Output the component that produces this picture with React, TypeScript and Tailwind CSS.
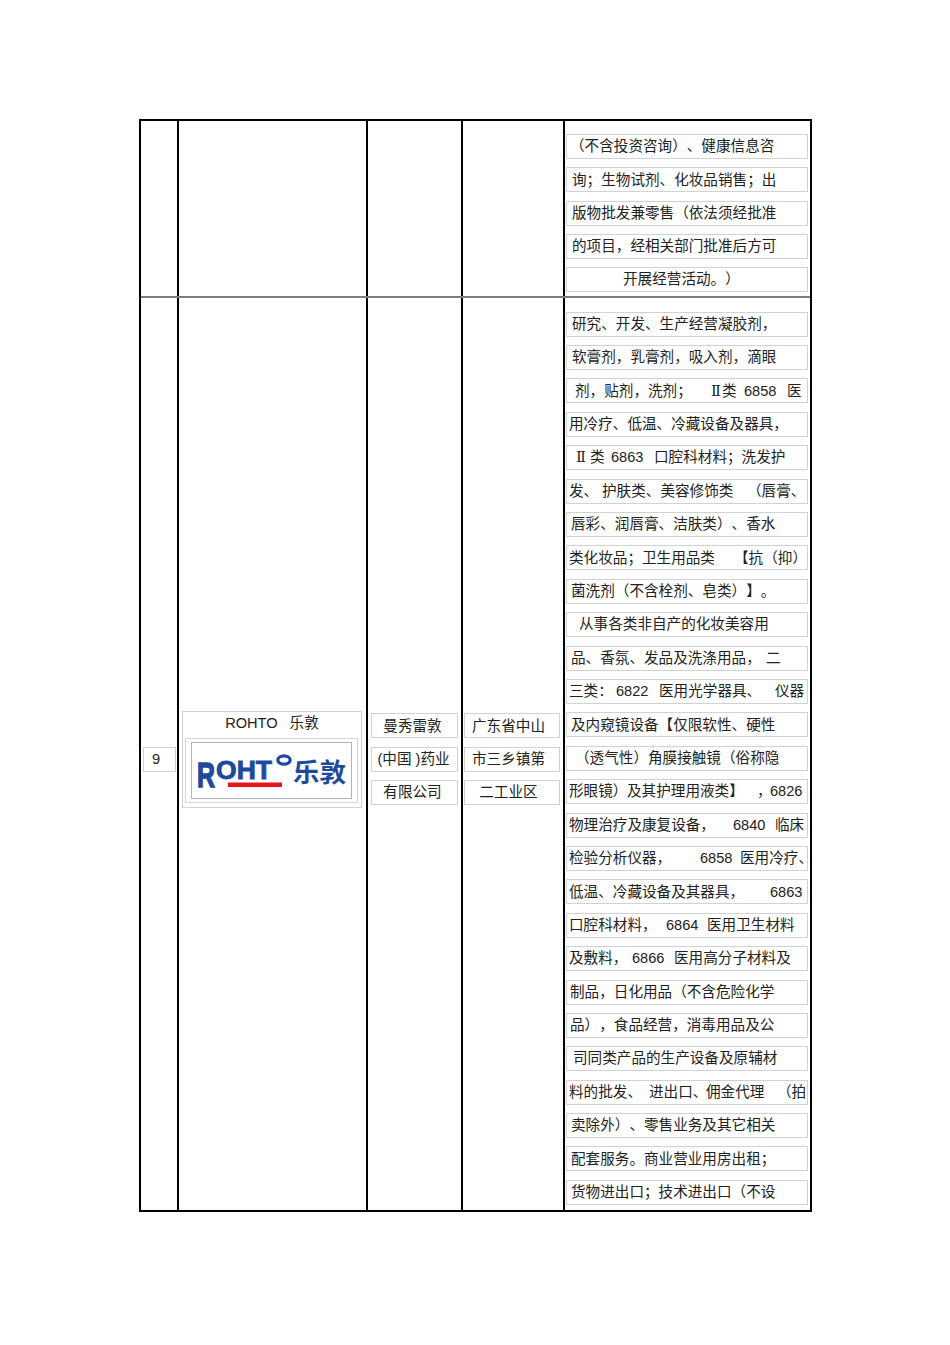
type Seg = [string, number];

// 每行文字：[文本, 起始x]，起始x 为截图中的像素位置
const row1: Seg[][] = [
  [['（不含投资咨询）、健康信息咨', 571]],
  [['询；生物试剂、化妆品销售；出', 573]],
  [['版物批发兼零售（依法须经批准', 573]],
  [['的项目，经相关部门批准后方可', 573]],
  [['开展经营活动。）', 624]],
];

const row2: Seg[][] = [
  [['研究、开发、生产经营凝胶剂，', 573]],
  [['软膏剂，乳膏剂，吸入剂，滴眼', 573]],
  [['剂，贴剂，洗剂；', 576], ['Ⅱ', 712], ['类', 723], ['6858', 745], ['医', 788]],
  [['用冷疗、低温、冷藏设备及器具，', 570]],
  [['Ⅱ', 577], ['类', 591], ['6863', 612], ['口腔科材料；洗发护', 655]],
  [['发、', 570], ['护肤类、美容修饰类', 603], ['（唇膏、', 748]],
  [['唇彩、润唇膏、洁肤类）、香水', 572]],
  [['类化妆品；卫生用品类', 570], ['【抗（抑）', 735]],
  [['菌洗剂（不含栓剂、皂类）】。', 572]],
  [['从事各类非自产的化妆美容用', 580]],
  [['品、香氛、发品及洗涤用品，', 572], ['二', 767]],
  [['三类：', 570], ['6822', 617], ['医用光学器具、', 660], ['仪器', 776]],
  [['及内窥镜设备【仅限软性、硬性', 572]],
  [['（透气性）角膜接触镜（俗称隐', 576]],
  [['形眼镜）', 570], ['及其护理用液类】', 628], ['，', 758], ['6826', 771]],
  [['物理治疗及康复设备，', 570], ['6840', 734], ['临床', 776]],
  [['检验分析仪器，', 570], ['6858', 701], ['医用冷疗、', 741]],
  [['低温、冷藏设备及其器具，', 570], ['6863', 771]],
  [['口腔科材料，', 570], ['6864', 667], ['医用卫生材料', 708]],
  [['及敷料，', 570], ['6866', 633], ['医用高分子材料及', 675]],
  [['制品，日化用品（不含危险化学', 571]],
  [['品），食品经营，消毒用品及公', 571]],
  [['司同类产品的生产设备及原辅材', 574]],
  [['料的批发、', 570], ['进出口、', 650], ['佣金代理', 707], ['（拍', 778]],
  [['卖除外）、零售业务及其它相关', 572]],
  [['配套服务。商业营业用房出租；', 572]],
  [['货物进出口；技术进出口（不设', 572]],
];

function renderText(t: string) {
  const parts = t.split('Ⅱ');
  return parts.map((p, i) => (
    <span key={i}>
      {i > 0 && <span className="font-['Liberation_Serif','DejaVu_Serif','DejaVu_Sans','Noto_Sans_CJK_SC',serif]">Ⅱ</span>}
      {p}
    </span>
  ));
}

function TextLine({ segs }: { segs: Seg[] }) {
  const left = 568;
  return (
    <div
      className="flex h-[25px] w-[242px] shrink-0 items-center whitespace-nowrap border border-[#d2d2d2] leading-none"
      style={{ paddingLeft: segs[0][1] - left }}
    >
      {segs.map(([t, x], i) => (
        <span
          key={i}
          className="shrink-0"
          style={i < segs.length - 1 ? { width: segs[i + 1][1] - x } : undefined}
        >
          {renderText(t)}
        </span>
      ))}
    </div>
  );
}

function SmallBox({ children, className = '' }: { children: React.ReactNode; className?: string }) {
  return (
    <div className={'flex h-[25px] items-center justify-center whitespace-nowrap border border-[#d2d2d2] leading-none ' + className}>
      {children}
    </div>
  );
}

function RohtoLogo() {
  const blue = '#1f4a9c';
  return (
    <svg width="158" height="55" viewBox="0 0 158 55">
      <text
        fontFamily="'Liberation Sans', Arial, sans-serif"
        fontWeight="bold"
        fill={blue}
        stroke={blue}
      >
        <tspan x="5" y="43.5" fontSize="35" textLength="18" lengthAdjust="spacingAndGlyphs" strokeWidth="1.4">
          R
        </tspan>
        <tspan x="24" y="36" fontSize="25" textLength="56" lengthAdjust="spacingAndGlyphs" strokeWidth="0.8">
          OHT
        </tspan>
      </text>
      <ellipse cx="92" cy="17" rx="6.2" ry="4.2" fill="none" stroke={blue} strokeWidth="3.2" />
      <rect x="36" y="39.5" width="54" height="4.5" fill="#e8141e" />
      <text
        x="101"
        y="38.5"
        fontFamily="'Noto Sans CJK SC', sans-serif"
        fontWeight="bold"
        fontSize="26"
        textLength="53"
        lengthAdjust="spacingAndGlyphs"
        fill={blue}
      >
        乐敦
      </text>
    </svg>
  );
}

export default function App() {
  return (
    <div className="min-h-[1345px] bg-white pl-[139px] pt-[119px] font-['Liberation_Sans','Noto_Sans_CJK_SC',sans-serif] text-[14.6px] text-[#222] [text-spacing-trim:space-all]">
      <div className="w-[673px] border-2 border-black">
        {/* 第一行（续上页） */}
        <div className="flex h-[177px] border-b-2 border-[#7c7c7c]">
          <div className="w-[38px] border-r-2 border-black" />
          <div className="w-[189px] border-r-2 border-black" />
          <div className="w-[95px] border-r-2 border-black" />
          <div className="w-[102px] border-r-2 border-black" />
          <div className="flex flex-1 flex-col gap-[8.3px] pl-[1px] pt-[13px]">
            {row1.map((segs, i) => (
              <TextLine key={i} segs={segs} />
            ))}
          </div>
        </div>

        {/* 第二行 */}
        <div className="flex h-[912px]">
          <div className="w-[38px] border-r-2 border-black pt-[449.3px]">
            <div className="ml-[2px] flex h-[24.5px] w-[33px] items-center border border-[#d2d2d2] pl-[8px] leading-none">
              9
            </div>
          </div>

          <div className="w-[189px] border-r-2 border-black pt-[412.7px]">
            <div className="ml-[3px] h-[97.6px] w-[180px] border border-[#d2d2d2]">
              <div className="pt-[3.7px] text-center leading-[17px]">
                ROHTO<span className="ml-[12px]">乐敦</span>
              </div>
              <div className="ml-[2px] mt-[5.9px] h-[65px] w-[173px] border border-[#d6d6d6] pl-[5px] pt-[3px]">
                <div className="h-[56.7px] w-[160.7px] border border-[#b4b4b4] bg-white">
                  <RohtoLogo />
                </div>
              </div>
            </div>
          </div>

          <div className="flex w-[95px] flex-col gap-[8.4px] border-r-2 border-black pt-[415.3px]">
            <SmallBox className="ml-[3px] w-[87px] pr-[4px]">曼秀雷敦</SmallBox>
            <SmallBox className="ml-[3px] w-[87px] pr-[2px]">(中国 )药业</SmallBox>
            <SmallBox className="ml-[3px] w-[87px] pr-[4px]">有限公司</SmallBox>
          </div>

          <div className="flex w-[102px] flex-col gap-[8.4px] border-r-2 border-black pt-[415.3px]">
            <SmallBox className="ml-[1px] w-[96px] pr-[7px]">广东省中山</SmallBox>
            <SmallBox className="ml-[1px] w-[96px] pr-[7px]">市三乡镇第</SmallBox>
            <SmallBox className="ml-[1px] w-[96px] pr-[7px]">二工业区</SmallBox>
          </div>

          <div className="flex flex-1 flex-col gap-[8.4px] pl-[1px] pt-[13.7px]">
            {row2.map((segs, i) => (
              <TextLine key={i} segs={segs} />
            ))}
          </div>
        </div>
      </div>
    </div>
  );
}
